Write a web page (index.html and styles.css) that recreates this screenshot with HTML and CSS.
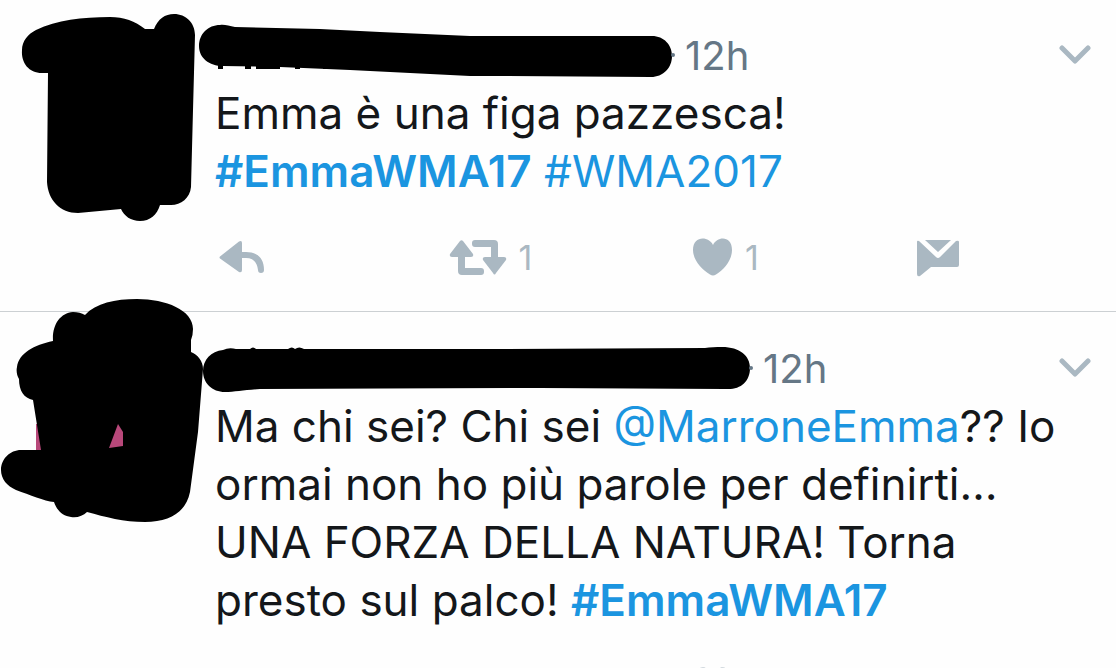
FILE: index.html
```html
<!DOCTYPE html>
<html lang="it">
  <head>
    <meta charset="utf-8">
    <title>Tweets</title>
    <link rel="stylesheet" href="styles.css">
  </head>
  <body>
    <main class="timeline">
      <article class="tweet">
        <svg class="avatar" viewBox="0 0 215 224" aria-hidden="true">
          <path d="M48 73H42C29 73 21 63 22 50C22 41 28 34 36 30C57 20 82 17 110 17C124 17 135 21 145 29H154C158 19 165 14 174 14C186 14 195 23 195 35L193 110L191 187C190 198 181 205 171 205H160C157 215 150 221 140 221C131 221 124 216 121 209L78 213C60 213 48 200 47 182Z" />
        </svg>
        <div class="content">
          <header class="tweet-header">
            <svg class="name" width="472" height="58" viewBox="0 0 472 58" aria-hidden="true">
              <path d="M20 -1C24 -2 29 0 35 1L120 3L180 6L270 10H452C464 10 472 19 472 30C472 42 463 51 451 51L290 50H270L150 44L80 41L23 40C9 40 -1 32 -1 20C-1 8 8 -1 20 -1Z" />
              <path d="M18 38h5v5h-5zM45 38h6v5h-6zM56 38h24v5H56zM95 38h5v5h-5zM123 38h4v5h-4z" />
              <circle class="dot" cx="473" cy="29" r="2" />
            </svg>
            <time class="time">12h</time>
            <button class="more" aria-label="More">
              <svg width="32" height="20" viewBox="0 0 32 20"><path d="M3 3L16 16L29 3" /></svg>
            </button>
          </header>
          <p class="text">Emma è una figa pazzesca!<br><a class="match" href="#">#EmmaWMA17</a> <a href="#">#WMA2017</a></p>
          <footer class="actions">
            <button aria-label="Reply">
              <svg width="46" height="38" viewBox="0 1 46 38"><path d="M1 17.500L20 2.500Q23 1 23 4V13H27C38 13 45 19 45 31A3 3 0 0 1 39 31C38 23 34 19 27 19H23V31Q23 34 20 33L1 19.500Q0 18.500 1 17.500Z" /></svg>
            </button>
            <button aria-label="Retweet">
              <svg width="56" height="38" viewBox="0 1 56 38"><path d="M10 2Q11.500 0.500 13 2L23 15Q24 18 21 18H15V29H31A3 3 0 0 1 34 32V33A3 3 0 0 1 31 36H12Q8 36 8 32V18H2Q-1 18 0 15ZM25 1H44Q48 1 48 5V18H54Q57 18 56 21L46 34Q44.500 37 43 34L33 21Q32 18 35 18H41V8H25A3 3 0 0 1 22 5V4A3 3 0 0 1 25 1Z" /></svg>
              <span>1</span>
            </button>
            <button aria-label="Like">
              <svg width="40" height="38" viewBox="0 2 40 38"><path d="M20 7C16 -2 0 -3 0 12C0 22 9 32 17 36.500Q20 38.500 23 36.500C31 32 39 22 39 12C39 -3 24 -2 20 7Z" /></svg>
              <span>1</span>
            </button>
            <button aria-label="Message">
              <svg width="42" height="38" viewBox="0 1 42 38"><path d="M0 3Q0 1 2 2L19 18Q21 20 23 18L39 2Q42 1 42 3V26Q42 28 40 28H14L3 37Q0 38 0 35ZM8 1H34L21 13Z" /></svg>
            </button>
          </footer>
        </div>
      </article>

      <article class="tweet">
        <svg class="avatar" viewBox="0 0 215 224" aria-hidden="true">
          <path class="photo" d="M36 112H41V150H36ZM106 108H126V150H106Z" />
          <path fill-rule="evenodd" d="M53 29C52 13 60 1 73 0Q80 0 85 3C96 -9 115 -13 137 -13C166 -13 193 -2 193 17Q193 23 191 28V40C198 43 203 49 203 57L198 120L190 180C186 200 170 210 145 210C124 210 105 205 87 200C83 204 77 206 71 205C63 204 57 199 54 190C44 189 30 183 16 178C7 174 1 167 1 158C1 147 10 138 21 138H41L33 88C24 86 19 79 19 67C17 64 16 59 17 55C19 41 34 33 53 29ZM118 112L123 120V134L109 136Z" />
        </svg>
        <div class="content">
          <header class="tweet-header">
            <svg class="name" width="550" height="58" viewBox="0 -1 550 58" aria-hidden="true">
              <path d="M23 10Q29 7 36 9H50Q53 6 56 9H88Q92 6 95 9Q99 6 104 9H300L505 8C510 7 516 7 522 7C540 7 550 16 550 28C550 42 540 50 526 49L340 48L60 49C45 50 35 52 25 52C12 52 3 43 3 31C3 20 11 11 23 10Z" />
              <circle class="dot" cx="551" cy="28" r="2" />
            </svg>
            <time class="time">12h</time>
            <button class="more" aria-label="More">
              <svg width="32" height="20" viewBox="0 0 32 20"><path d="M3 3L16 16L29 3" /></svg>
            </button>
          </header>
          <p class="text">Ma chi sei? Chi sei <a href="#">@MarroneEmma</a>?? Io ormai non ho più parole per definirti… UNA FORZA DELLA NATURA! Torna presto sul palco! <a class="match" href="#">#EmmaWMA17</a></p>
          <footer class="actions">
            <button aria-label="Reply">
              <svg width="46" height="38" viewBox="0 1 46 38"><path d="M1 17.500L20 2.500Q23 1 23 4V13H27C38 13 45 19 45 31A3 3 0 0 1 39 31C38 23 34 19 27 19H23V31Q23 34 20 33L1 19.500Q0 18.500 1 17.500Z" /></svg>
            </button>
            <button aria-label="Retweet">
              <svg width="56" height="38" viewBox="0 1 56 38"><path d="M10 2Q11.500 0.500 13 2L23 15Q24 18 21 18H15V29H31A3 3 0 0 1 34 32V33A3 3 0 0 1 31 36H12Q8 36 8 32V18H2Q-1 18 0 15ZM25 1H44Q48 1 48 5V18H54Q57 18 56 21L46 34Q44.500 37 43 34L33 21Q32 18 35 18H41V8H25A3 3 0 0 1 22 5V4A3 3 0 0 1 25 1Z" /></svg>
            </button>
            <button aria-label="Like">
              <svg width="40" height="38" viewBox="0 2 40 38"><path d="M20 7C16 -2 0 -3 0 12C0 22 9 32 17 36.500Q20 38.500 23 36.500C31 32 39 22 39 12C39 -3 24 -2 20 7Z" /></svg>
            </button>
            <button aria-label="Message">
              <svg width="42" height="38" viewBox="0 1 42 38"><path d="M0 3Q0 1 2 2L19 18Q21 20 23 18L39 2Q42 1 42 3V26Q42 28 40 28H14L3 37Q0 38 0 35ZM8 1H34L21 13Z" /></svg>
            </button>
          </footer>
        </div>
      </article>
    </main>
  </body>
</html>
```
FILE: styles.css
```css
body {
  margin: 0;
  background-color: #fefefe;
  color: #14171a;
  font-family: Inter, "Liberation Sans", sans-serif;
}
.tweet {
  display: grid;
  grid-template-columns: 215px 1fr;
  border-bottom: 1px solid #ccd0d3;
}
.avatar {
  width: 215px;
  height: 224px;
  overflow: visible;
}
.photo {
  fill: #b8487a;
}
.content {
  padding: 26px 25px 31px 0;
}
.tweet + .tweet .content {
  padding-top: 27px;
}
.tweet-header {
  display: flex;
  align-items: center;
  height: 58px;
}
.name {
  margin-left: -15px;
  overflow: visible;
}
.dot {
  fill: #657786;
}
.time {
  margin-left: 13px;
  color: #657786;
  font-size: 40px;
}
button {
  display: flex;
  align-items: center;
  padding: 0;
  border: none;
  background: none;
  color: #aab8c2;
  font: inherit;
  cursor: pointer;
}
.more {
  margin-left: auto;
}
.more path {
  fill: none;
  stroke: #aab8c2;
  stroke-width: 5px;
  stroke-linecap: round;
  stroke-linejoin: round;
}
.text {
  margin: 0;
  font-size: 44px;
  line-height: 58px;
}
a {
  color: #1b95e0;
  text-decoration: none;
}
.match {
  font-weight: 600;
}
.actions {
  display: grid;
  grid-template-columns: 232fr 243fr 225fr 174fr;
  margin-top: 40px;
  padding-left: 4px;
}
.actions button {
  align-items: flex-start;
  gap: 12px;
  height: 40px;
  font-size: 34px;
  line-height: 36px;
}
.actions svg {
  fill: #aab8c2;
  overflow: visible;
}
```
